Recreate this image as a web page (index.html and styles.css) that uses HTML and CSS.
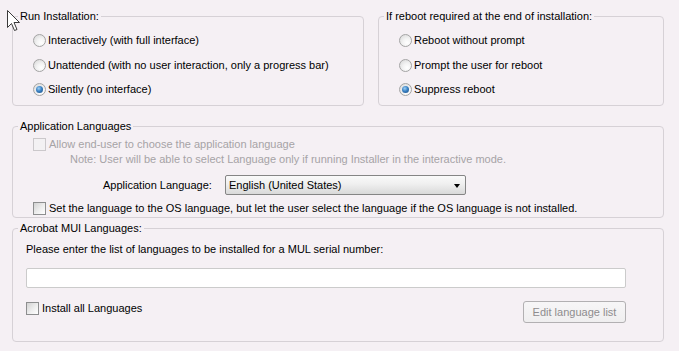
FILE: index.html
```html
<!DOCTYPE html>
<html lang="en">
<head>
<meta charset="utf-8">
<title>Installation Options</title>
<link rel="stylesheet" href="styles.css">
</head>
<body>
<div class="page">
  <div class="top-row">
    <fieldset class="group group-run">
      <legend>Run Installation:</legend>
      <div class="group-body radio-body">
        <label class="opt"><span class="radio"></span>Interactively (with full interface)</label>
        <label class="opt"><span class="radio"></span>Unattended (with no user interaction, only a progress bar)</label>
        <label class="opt"><span class="radio checked"></span>Silently (no interface)</label>
      </div>
    </fieldset>
    <fieldset class="group group-reboot">
      <legend>If reboot required at the end of installation:</legend>
      <div class="group-body radio-body">
        <label class="opt"><span class="radio"></span>Reboot without prompt</label>
        <label class="opt"><span class="radio"></span>Prompt the user for reboot</label>
        <label class="opt"><span class="radio checked"></span>Suppress reboot</label>
      </div>
    </fieldset>
  </div>

  <fieldset class="group group-lang">
    <legend>Application Languages</legend>
    <div class="group-body lang-body">
      <label class="check-row disabled"><span class="checkbox disabled"></span>Allow end-user to choose the application language</label>
      <p class="note">Note: User will be able to select Language only if running Installer in the interactive mode.</p>
      <div class="lang-row">
        <span class="lang-label">Application Language:</span>
        <div class="select"><span class="select-text">English (United States)</span><span class="arrow"></span></div>
      </div>
      <label class="check-row row-os"><span class="checkbox"></span>Set the language to the OS language, but let the user select the language if the OS language is not installed.</label>
    </div>
  </fieldset>

  <fieldset class="group group-mui">
    <legend>Acrobat MUI Languages:</legend>
    <div class="group-body mui-body">
      <p class="prompt">Please enter the list of languages to be installed for a MUL serial number:</p>
      <div class="text-input"></div>
      <div class="mui-row">
        <label class="check-row"><span class="checkbox"></span>Install all Languages</label>
        <button class="btn" disabled>Edit language list</button>
      </div>
    </div>
  </fieldset>
</div>

<svg class="cursor" width="14" height="22" viewBox="0 0 14 22">
  <path d="M0.5 0.5 V17.5 L4.5 13.5 L7.5 20.5 L10 19.5 L7 12.5 H12.5 Z" fill="#ffffff" stroke="#3a3a3a" stroke-width="1" stroke-linejoin="miter"/>
</svg>
</body>
</html>
```

FILE: styles.css
```css
html, body {
  margin: 0;
  padding: 0;
  background: #f5f0f4;
}

body {
  font-family: "Liberation Sans", Arial, sans-serif;
  font-size: 11px;
  line-height: 13px;
  color: #000;
  width: 679px;
  height: 351px;
  overflow: hidden;
  position: relative;
}

.page {
  padding: 10px 15px 0 12px;
}

.top-row {
  display: flex;
  gap: 14px;
}

.group {
  margin: 0;
  box-sizing: border-box;
  min-width: 0;
  border: 1px solid #d6d1d6;
  border-radius: 4px;
  padding: 0;
}

.group legend {
  margin-left: 5px;
  padding: 0 2px;
  line-height: 13px;
  height: 13px;
}

.group-run {
  width: 352px;
}

.group-reboot {
  width: 286px;
}

.radio-body {
  padding: 5.25px 0 3.25px 20px;
}

.opt {
  display: flex;
  align-items: center;
  height: 24.5px;
}

.radio {
  flex: none;
  box-sizing: border-box;
  width: 13px;
  height: 13px;
  margin-right: 2px;
  border-radius: 50%;
  border: 1px solid #a4a4a4;
  background: radial-gradient(circle at 65% 70%, #ffffff 0%, #f3f3f3 40%, #d5d5d5 100%);
  position: relative;
}

.radio.checked::after {
  content: "";
  position: absolute;
  left: 2px;
  top: 2px;
  width: 7px;
  height: 7px;
  border-radius: 50%;
  background: radial-gradient(circle at 40% 35%, #9fd0f5 0%, #3b82c4 45%, #17477f 100%);
}

.group-lang {
  width: 652px;
  margin-top: 13.5px;
}

.lang-body {
  padding: 4.5px 0 2px 20px;
}

.check-row {
  display: flex;
  align-items: center;
  height: 14px;
}

.check-row.disabled {
  color: #a6a3a6;
}

.checkbox {
  flex: none;
  box-sizing: border-box;
  width: 13px;
  height: 13px;
  margin-right: 3px;
  border: 1px solid #8d8e8f;
  background: linear-gradient(135deg, #d2d2d2 0%, #eeeeee 55%, #ffffff 100%);
}

.checkbox.disabled {
  border-color: #cbc8cb;
  background: #f3f1f3;
}

.note {
  margin: 2px 0 0 37px;
  color: #a6a3a6;
}

.lang-row {
  display: flex;
  align-items: center;
  margin: 9px 0 0 70px;
  height: 20px;
}

.lang-label {
  width: 122px;
}

.select {
  box-sizing: border-box;
  width: 241px;
  height: 20px;
  border: 1px solid #858585;
  border-radius: 2px;
  background: linear-gradient(to bottom, #fafafa 0%, #efefef 45%, #d9d9d9 100%);
  display: flex;
  align-items: center;
  justify-content: space-between;
  padding: 0 5px 0 3px;
}

.arrow {
  width: 0;
  height: 0;
  border-left: 3.5px solid transparent;
  border-right: 3.5px solid transparent;
  border-top: 4px solid #000;
  margin-top: 1px;
}

.row-os {
  margin-top: 6px;
}

.group-mui {
  width: 652px;
  margin-top: 3.5px;
}

.mui-body {
  padding: 8.5px 37px 18px 13px;
}

.prompt {
  margin: 0;
}

.text-input {
  box-sizing: border-box;
  margin-top: 12px;
  height: 20px;
  background: #fff;
  border: 1px solid #cbcbcb;
  border-radius: 2px;
}

.mui-row {
  display: flex;
  justify-content: space-between;
  align-items: flex-start;
  margin-top: 13px;
}

.btn {
  box-sizing: border-box;
  width: 103px;
  height: 22px;
  margin: 0;
  padding: 0;
  font-family: "Liberation Sans", Arial, sans-serif;
  font-size: 11px;
  color: #8e8c8e;
  background: linear-gradient(to bottom, #f7f6f7, #efeeef);
  border: 1px solid #b2b0b2;
  border-radius: 3px;
}

.cursor {
  position: absolute;
  left: 7px;
  top: 10px;
}
```
